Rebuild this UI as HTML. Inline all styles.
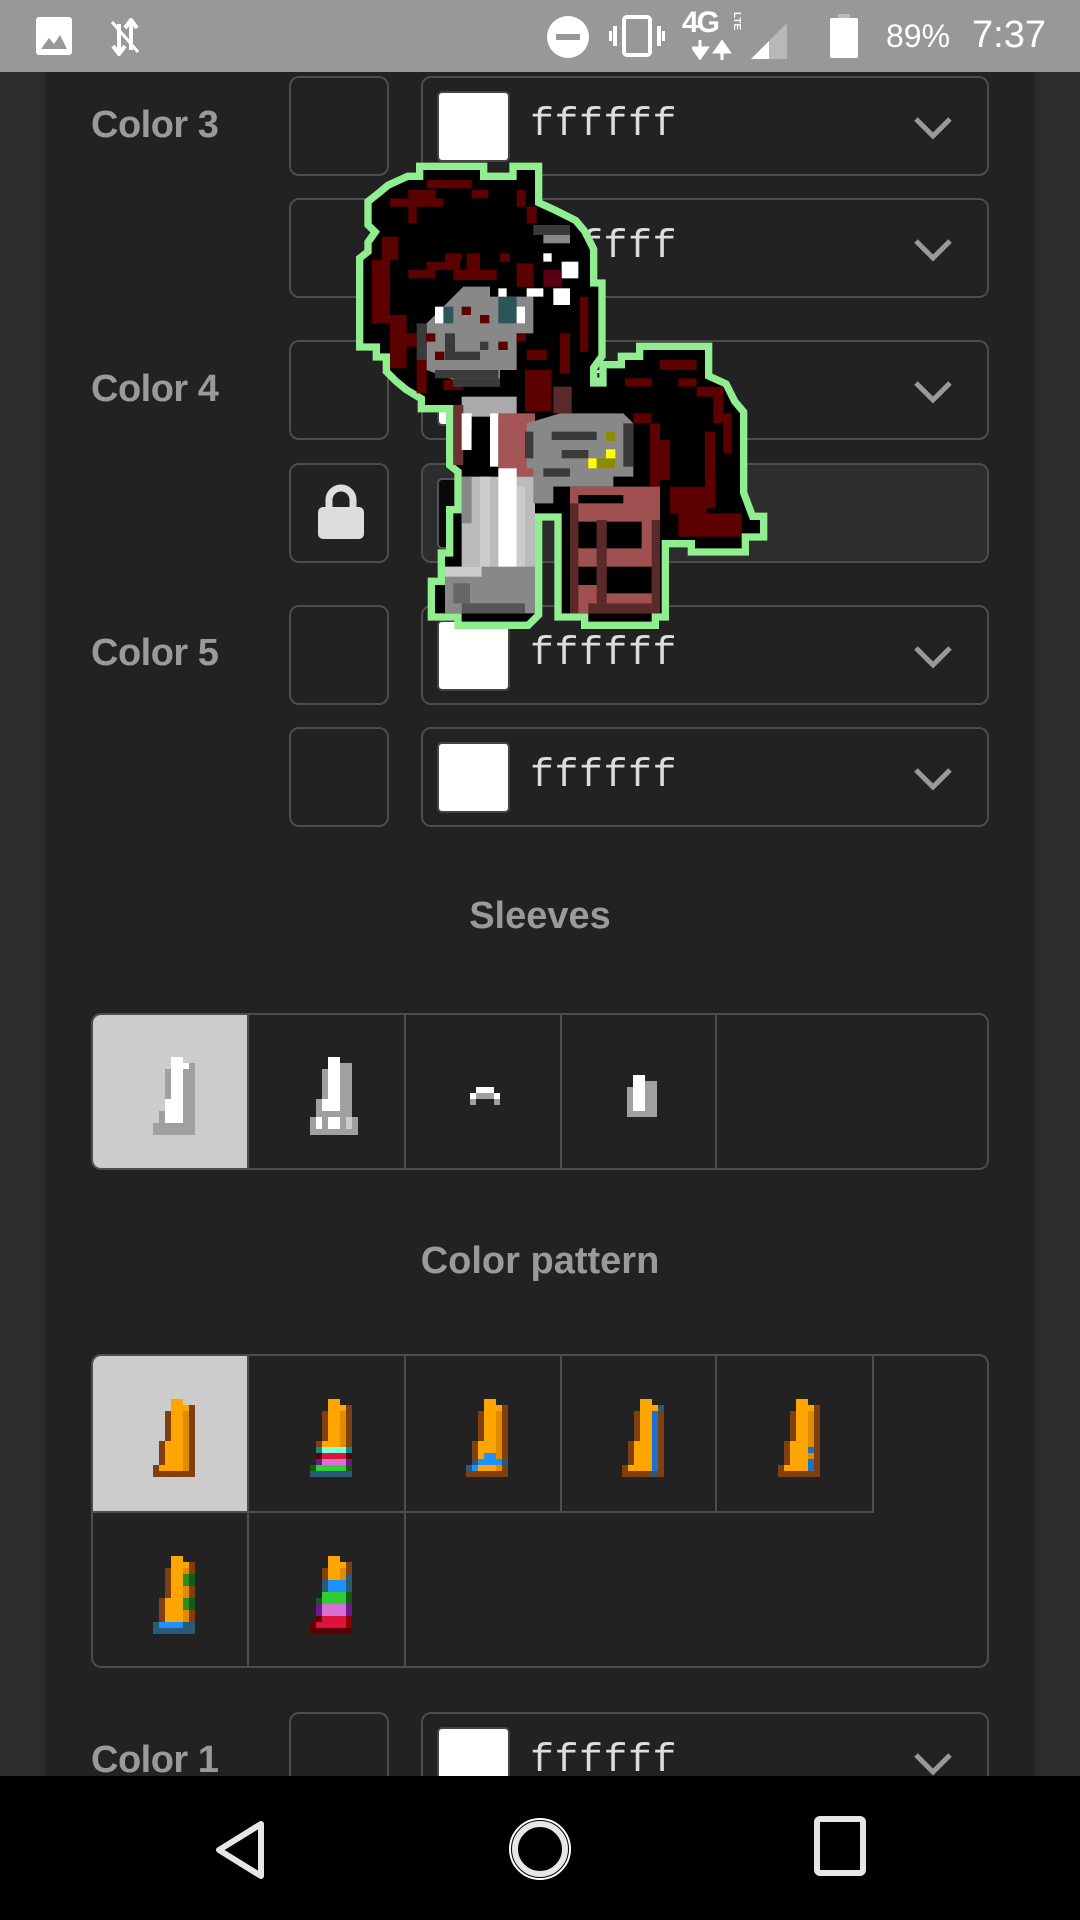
<!DOCTYPE html>
<html><head><meta charset="utf-8">
<style>
*{margin:0;padding:0;box-sizing:border-box}
body{width:1080px;height:1920px;overflow:hidden;background:#2c2c2c;position:relative;font-family:"Liberation Sans",sans-serif}
.abs{position:absolute}
#panel{left:45px;top:0;width:990px;height:1920px;background:#222}
#status{left:0;top:0;width:1080px;height:72px;background:#989898}
.lbl{position:absolute;left:91px;color:#9a9a9a;font-weight:bold;font-size:38px;line-height:40px;letter-spacing:-0.5px}
.sb{position:absolute;left:289px;width:100px;height:100px;border:2.5px solid #4d4d4d;border-radius:10px}
.sel{position:absolute;left:421px;width:568px;height:100px;border:2.5px solid #4d4d4d;border-radius:10px}
.sw{position:absolute;left:14px;top:13px;width:73px;height:71px;background:#fff;border:2px solid #444;border-radius:5px}
.hx{position:absolute;left:107px;top:26px;font-family:"Liberation Mono",monospace;font-size:40px;line-height:44px;color:#ddd;letter-spacing:0.5px}
.chev{position:absolute;left:490px;top:38px}
.title{position:absolute;left:0;width:1080px;text-align:center;color:#9a9a9a;font-weight:bold;font-size:38px}
.grid{position:absolute;left:91px;width:898px;border:2.5px solid #4d4d4d;border-radius:10px;overflow:hidden}
.cell{position:absolute;border-right:2.5px solid #4d4d4d}
</style></head><body>
<div id="panel" class="abs"></div>

<!-- Color 3 -->
<div class="lbl" style="top:105px">Color 3</div>
<div class="sb" style="top:76px"></div>
<div class="sel" style="top:76px"><div class="sw"></div><div class="hx">ffffff</div><svg class="chev" width="40" height="24"><path d="M3 3 L20 20 L37 3" stroke="#999" stroke-width="5" fill="none"/></svg></div>
<div class="sb" style="top:198px"></div>
<div class="sel" style="top:198px"><div class="sw"></div><div class="hx">ffffff</div><svg class="chev" width="40" height="24"><path d="M3 3 L20 20 L37 3" stroke="#999" stroke-width="5" fill="none"/></svg></div>

<!-- Color 4 -->
<div class="lbl" style="top:369px">Color 4</div>
<div class="sb" style="top:340px"></div>
<div class="sel" style="top:340px"><div class="sw"></div><div class="hx">ffffff</div><svg class="chev" width="40" height="24"><path d="M3 3 L20 20 L37 3" stroke="#999" stroke-width="5" fill="none"/></svg></div>
<div class="sb" style="top:463px"><svg class="abs" style="left:26px;top:19px" width="48" height="56"><path d="M12 24 V16 A12 12 0 0 1 36 16 V24" stroke="#ddd" stroke-width="7" fill="none"/><rect x="1" y="23" width="46" height="32" rx="5" fill="#ddd"/></svg></div>
<div class="sel" style="top:463px;background:#2d2d2d"><div class="sw" style="background:#0a0a0a;border-color:#555"></div></div>

<!-- Color 5 -->
<div class="lbl" style="top:633px">Color 5</div>
<div class="sb" style="top:605px"></div>
<div class="sel" style="top:605px"><div class="sw"></div><div class="hx">ffffff</div><svg class="chev" width="40" height="24"><path d="M3 3 L20 20 L37 3" stroke="#999" stroke-width="5" fill="none"/></svg></div>
<div class="sb" style="top:727px"></div>
<div class="sel" style="top:727px"><div class="sw"></div><div class="hx">ffffff</div><svg class="chev" width="40" height="24"><path d="M3 3 L20 20 L37 3" stroke="#999" stroke-width="5" fill="none"/></svg></div>

<!-- icon symbols -->
<svg width="0" height="0" style="position:absolute">
<defs>
<g id="base">
<rect x="18" y="0" width="12" height="6" fill="currentColor"/>
</g>
</defs>
</svg>

<!-- Sleeves -->
<div class="title" style="top:895px">Sleeves</div>
<div class="grid" style="top:1013px;height:157px">
 <div class="cell" style="left:0;top:0;width:156px;height:157px;background:#ccc"></div>
 <div class="cell" style="left:156px;top:0;width:157px;height:157px"></div>
 <div class="cell" style="left:313px;top:0;width:156px;height:157px"></div>
 <div class="cell" style="left:469px;top:0;width:155px;height:157px"></div>
</div>
<svg class="abs" style="left:0;top:0" width="1080" height="1920" viewBox="0 0 1080 1920">
 <!-- sleeve 1 -->
 <g transform="translate(153,1057)">
  <rect x="12" y="12" width="30" height="66" fill="#a0a0a0"/><rect x="6" y="54" width="6" height="24" fill="#a0a0a0"/><rect x="0" y="66" width="42" height="12" fill="#a0a0a0"/>
  <rect x="18" y="0" width="12" height="6" fill="#fff"/><rect x="18" y="6" width="18" height="6" fill="#fff"/><rect x="18" y="12" width="12" height="54" fill="#fff"/><rect x="12" y="42" width="6" height="24" fill="#fff"/><rect x="6" y="66" width="30" height="0" fill="#fff"/>
  <rect x="36" y="6" width="6" height="60" fill="#a0a0a0"/>
 </g>
 <!-- sleeve 2 -->
 <g transform="translate(310,1057)">
  <rect x="18" y="0" width="12" height="6" fill="#fff"/><rect x="18" y="6" width="24" height="6" fill="#a0a0a0"/><rect x="18" y="6" width="12" height="6" fill="#fff"/>
  <rect x="12" y="12" width="30" height="48" fill="#a0a0a0"/><rect x="18" y="12" width="12" height="42" fill="#fff"/><rect x="6" y="42" width="36" height="18" fill="#a0a0a0"/><rect x="12" y="42" width="18" height="12" fill="#fff"/>
  <rect x="0" y="60" width="48" height="18" fill="#a0a0a0"/><rect x="6" y="60" width="6" height="12" fill="#fff"/><rect x="18" y="60" width="12" height="12" fill="#fff"/><rect x="36" y="60" width="6" height="12" fill="#ccc"/>
 </g>
 <!-- sleeve 3 -->
 <g transform="translate(470,1087)">
  <rect x="6" y="0" width="18" height="6" fill="#fff"/><rect x="0" y="6" width="6" height="6" fill="#fff"/><rect x="6" y="6" width="18" height="6" fill="#a0a0a0"/><rect x="24" y="6" width="6" height="6" fill="#fff"/><rect x="0" y="12" width="6" height="6" fill="#a0a0a0"/><rect x="24" y="12" width="6" height="6" fill="#a0a0a0"/>
 </g>
 <!-- sleeve 4 -->
 <g transform="translate(627,1075)">
  <rect x="6" y="0" width="12" height="6" fill="#fff"/><rect x="0" y="12" width="30" height="30" fill="#a0a0a0"/><rect x="18" y="6" width="12" height="6" fill="#a0a0a0"/><rect x="6" y="6" width="12" height="30" fill="#fff"/>
 </g>
</svg>

<!-- Color pattern -->
<div class="title" style="top:1240px">Color pattern</div>
<div class="grid" style="top:1354px;height:314px">
 <div class="cell" style="left:0;top:0;width:156px;height:157px;background:#ccc;border-bottom:2.5px solid #4d4d4d"></div>
 <div class="cell" style="left:156px;top:0;width:157px;height:157px;border-bottom:2.5px solid #4d4d4d"></div>
 <div class="cell" style="left:313px;top:0;width:156px;height:157px;border-bottom:2.5px solid #4d4d4d"></div>
 <div class="cell" style="left:469px;top:0;width:155px;height:157px;border-bottom:2.5px solid #4d4d4d"></div>
 <div class="cell" style="left:624px;top:0;width:157px;height:157px;border-bottom:2.5px solid #4d4d4d"></div>
 <div class="cell" style="left:0;top:155px;width:156px;height:160px"></div>
 <div class="cell" style="left:156px;top:155px;width:157px;height:160px"></div>
</div>
<svg class="abs" style="left:0;top:0" width="1080" height="1920">
 <defs>
  <g id="boot">
   <rect x="18" y="0" width="12" height="6" fill="#ffa500"/>
   <rect x="18" y="6" width="18" height="6" fill="#ffa500"/><rect x="36" y="6" width="6" height="72" fill="#7f3f0f"/>
   <rect x="12" y="12" width="6" height="30" fill="#7f3f0f"/><rect x="18" y="12" width="12" height="54" fill="#ffa500"/><rect x="30" y="12" width="6" height="60" fill="#e08c00"/>
   <rect x="6" y="42" width="6" height="24" fill="#7f3f0f"/><rect x="12" y="42" width="6" height="30" fill="#ffa500"/>
   <rect x="0" y="66" width="6" height="6" fill="#7f3f0f"/><rect x="6" y="66" width="24" height="6" fill="#ffa500"/>
   <rect x="0" y="72" width="42" height="6" fill="#7f3f0f"/>
  </g>
 </defs>
 <use href="#boot" x="153" y="1399"/>
 <g transform="translate(310,1399)"><use href="#boot"/>
  <rect x="6" y="48" width="36" height="6" fill="#7fffd4"/><rect x="36" y="48" width="6" height="6" fill="#0a8a8a"/><rect x="6" y="48" width="6" height="6" fill="#0a8a8a"/>
  <rect x="6" y="54" width="36" height="6" fill="#dc143c"/><rect x="6" y="54" width="6" height="6" fill="#5a0000"/><rect x="36" y="54" width="6" height="6" fill="#5a0000"/>
  <rect x="6" y="60" width="36" height="6" fill="#da70d6"/><rect x="6" y="60" width="6" height="6" fill="#6a1a8a"/><rect x="36" y="60" width="6" height="6" fill="#6a1a8a"/>
  <rect x="0" y="66" width="42" height="6" fill="#32cd32"/><rect x="0" y="66" width="6" height="6" fill="#145a14"/><rect x="36" y="66" width="6" height="6" fill="#145a14"/>
  <rect x="0" y="72" width="42" height="6" fill="#2a5a7a"/></g>
 <g transform="translate(466,1399)"><use href="#boot"/>
  <rect x="18" y="54" width="12" height="6" fill="#1e90ff"/><rect x="6" y="60" width="36" height="6" fill="#1e90ff"/><rect x="6" y="60" width="6" height="6" fill="#2a5a7a"/><rect x="36" y="60" width="6" height="6" fill="#2a5a7a"/><rect x="0" y="66" width="6" height="6" fill="#2a5a7a"/><rect x="6" y="66" width="6" height="6" fill="#1e90ff"/></g>
 <g transform="translate(622,1399)"><use href="#boot"/><rect x="30" y="12" width="6" height="60" fill="#1e70d0"/><rect x="36" y="6" width="6" height="6" fill="#2a5a7a"/><rect x="30" y="72" width="6" height="6" fill="#2a5a7a"/></g>
 <g transform="translate(778,1399)"><use href="#boot"/><rect x="30" y="48" width="6" height="6" fill="#1e70d0"/><rect x="30" y="60" width="6" height="6" fill="#1e70d0"/><rect x="30" y="72" width="6" height="0" fill="#1e70d0"/><rect x="30" y="66" width="6" height="6" fill="#1e70d0"/></g>
 <g transform="translate(153,1556)"><use href="#boot"/><rect x="30" y="18" width="12" height="12" fill="#2a8a2a"/><rect x="36" y="18" width="6" height="12" fill="#145a14"/><rect x="30" y="42" width="12" height="12" fill="#2a8a2a"/><rect x="36" y="42" width="6" height="12" fill="#145a14"/><rect x="0" y="66" width="42" height="12" fill="#2a5a7a"/><rect x="6" y="66" width="24" height="6" fill="#1e90ff"/></g>
 <g transform="translate(310,1556)"><use href="#boot"/>
  <rect x="12" y="24" width="30" height="12" fill="#1e90ff"/><rect x="12" y="24" width="6" height="12" fill="#2a5a7a"/><rect x="36" y="18" width="6" height="18" fill="#2a5a7a"/>
  <rect x="12" y="36" width="30" height="12" fill="#32cd32"/><rect x="6" y="42" width="6" height="6" fill="#145a14"/><rect x="36" y="36" width="6" height="12" fill="#145a14"/>
  <rect x="6" y="48" width="36" height="12" fill="#da70d6"/><rect x="6" y="48" width="6" height="12" fill="#6a1a8a"/><rect x="36" y="48" width="6" height="12" fill="#6a1a8a"/>
  <rect x="6" y="60" width="36" height="12" fill="#dc143c"/><rect x="6" y="60" width="6" height="6" fill="#5a0000"/><rect x="0" y="66" width="6" height="6" fill="#5a0000"/><rect x="36" y="60" width="6" height="12" fill="#8a0000"/>
  <rect x="0" y="72" width="42" height="6" fill="#5a0000"/></g>
</svg>

<!-- Color 1 -->
<div class="lbl" style="top:1740px">Color 1</div>
<div class="sb" style="top:1712px"></div>
<div class="sel" style="top:1712px"><div class="sw"></div><div class="hx">ffffff</div><svg class="chev" width="40" height="24"><path d="M3 3 L20 20 L37 3" stroke="#999" stroke-width="5" fill="none"/></svg></div>

<!-- Pony -->
<svg class="abs" style="left:300px;top:140px" width="500" height="500" viewBox="0 0 1500 1500">
 <polygon fill="#000" stroke="#90ee90" stroke-width="44" stroke-linejoin="miter" paint-order="stroke" points="370,90 540,90 540,120 650,120 650,90 705,90 705,195 760,220 820,250 845,280 870,330 870,440 895,440 895,645 870,680 870,740 920,740 920,685 975,685 975,660 1030,660 1030,630 1215,630 1215,715 1270,740 1295,790 1320,820 1320,1060 1350,1140 1380,1140 1380,1180 1325,1180 1325,1225 1185,1225 1185,1200 1085,1200 1085,1420 1055,1420 1055,1445 865,1445 865,1420 785,1420 785,1120 705,1120 705,1420 680,1445 485,1445 485,1420 405,1420 405,1335 435,1335 435,1250 460,1250 460,1120 485,1120 485,990 460,970 460,795 375,795 375,770 325,740 295,715 270,690 270,640 240,640 240,610 190,610 190,360 215,340 215,310 240,275 215,250 215,190 240,170 270,145 325,120 370,120"/>
 <g fill="#5c0000">
  <rect x="270" y="175" width="160" height="25"/><rect x="380" y="120" width="135" height="25"/><rect x="325" y="150" width="80" height="25"/><rect x="515" y="150" width="50" height="25"/>
  <rect x="215" y="360" width="55" height="190"/><rect x="245" y="290" width="50" height="70"/><rect x="270" y="525" width="50" height="160"/><rect x="325" y="200" width="25" height="50"/>
  <rect x="435" y="340" width="50" height="25"/><rect x="380" y="365" width="100" height="25"/><rect x="325" y="390" width="80" height="25"/><rect x="460" y="390" width="130" height="30"/>
  <rect x="650" y="370" width="50" height="70"/><rect x="500" y="340" width="40" height="50"/><rect x="600" y="340" width="30" height="25"/><rect x="650" y="150" width="25" height="50"/><rect x="680" y="200" width="30" height="50"/>
  <rect x="840" y="470" width="25" height="165"/><rect x="780" y="580" width="30" height="120"/><rect x="680" y="630" width="60" height="30"/><rect x="675" y="690" width="80" height="125"/>
  <rect x="350" y="660" width="30" height="100"/><rect x="430" y="720" width="60" height="30"/><rect x="300" y="580" width="50" height="40"/>
  <rect x="1080" y="660" width="110" height="30"/><rect x="975" y="715" width="80" height="25"/><rect x="1135" y="715" width="55" height="25"/><rect x="1190" y="740" width="80" height="30"/><rect x="1240" y="770" width="30" height="80"/>
  <rect x="1000" y="820" width="55" height="30"/><rect x="1050" y="850" width="30" height="200"/><rect x="1080" y="900" width="30" height="120"/><rect x="1215" y="875" width="30" height="230"/><rect x="1270" y="820" width="25" height="120"/>
  <rect x="1110" y="1040" width="110" height="80"/><rect x="1135" y="1120" width="190" height="70"/>
 </g>
 <polygon fill="#888" points="380,550 490,440 570,440 570,470 700,470 700,580 650,580 650,690 600,690 600,740 460,740 460,720 380,690"/>
 <g fill="#3a3a3a"><rect x="435" y="580" width="30" height="80"/><rect x="460" y="635" width="80" height="25"/><rect x="405" y="690" width="190" height="25"/><rect x="460" y="715" width="140" height="25"/><rect x="540" y="605" width="25" height="25"/><rect x="350" y="550" width="30" height="110"/><rect x="700" y="255" width="110" height="30"/></g>
 <rect x="730" y="285" width="80" height="25" fill="#888"/>
 <g fill="#2d5558"><rect x="430" y="500" width="30" height="50"/><rect x="595" y="470" width="55" height="80"/></g>
 <g fill="#fff"><rect x="405" y="500" width="25" height="50"/><rect x="650" y="500" width="25" height="50"/><rect x="595" y="445" width="25" height="25"/><rect x="785" y="365" width="50" height="50"/><rect x="760" y="445" width="50" height="50"/><rect x="680" y="445" width="50" height="25"/><rect x="730" y="340" width="25" height="25"/></g>
 <rect x="730" y="390" width="55" height="50" fill="#5a0012"/>
 <g fill="#5c0000"><rect x="485" y="500" width="28" height="25"/><rect x="540" y="525" width="28" height="25"/><rect x="378" y="580" width="28" height="25"/><rect x="595" y="605" width="28" height="25"/><rect x="405" y="635" width="28" height="25"/><rect x="650" y="580" width="28" height="25"/></g>
 <!-- front body -->
 <rect x="485" y="770" width="165" height="60" fill="#aaa"/>
 <rect x="460" y="795" width="30" height="180" fill="#6b3333"/>
 <rect x="485" y="820" width="30" height="110" fill="#fff"/>
 <rect x="515" y="870" width="55" height="110" fill="#000"/>
 <rect x="570" y="820" width="25" height="160" fill="#fff"/>
 <rect x="595" y="820" width="110" height="190" fill="#a55555"/>
 <rect x="485" y="1010" width="220" height="300" fill="#bbb"/>
 <rect x="540" y="1010" width="30" height="300" fill="#ccc"/>
 <rect x="595" y="985" width="55" height="320" fill="#fff"/>
 <rect x="650" y="1040" width="25" height="270" fill="#ccc"/>
 <rect x="485" y="1010" width="30" height="140" fill="#888"/>
 <rect x="435" y="1280" width="270" height="140" fill="#888"/>
 <rect x="435" y="1280" width="110" height="30" fill="#ccc"/>
 <rect x="485" y="1390" width="190" height="30" fill="#555"/>
 <rect x="460" y="1330" width="50" height="60" fill="#666"/>
 <!-- wing -->
 <polygon fill="#888" points="680,850 780,820 970,820 1000,850 1000,1010 940,1010 940,1040 760,1040 760,1090 700,1090 700,985 680,985"/>
 <g fill="#3a3a3a"><rect x="755" y="875" width="135" height="25"/><rect x="785" y="930" width="80" height="25"/><rect x="730" y="985" width="80" height="25"/><rect x="675" y="875" width="25" height="80"/><rect x="970" y="850" width="30" height="130"/></g>
 <rect x="865" y="955" width="25" height="30" fill="#ff0"/><rect x="918" y="928" width="28" height="30" fill="#ff0"/><rect x="890" y="955" width="55" height="30" fill="#8b8b00"/><rect x="918" y="875" width="28" height="28" fill="#8b8b00"/>
 <!-- back leg -->
 <rect x="810" y="1040" width="270" height="380" fill="#a05050"/>
 <g fill="#5a2a2a"><rect x="810" y="1090" width="25" height="330"/><rect x="1055" y="1140" width="25" height="280"/><rect x="865" y="1390" width="190" height="30"/><rect x="890" y="1140" width="30" height="250"/><rect x="760" y="740" width="55" height="80"/></g>
 <g fill="#000"><rect x="835" y="1065" width="135" height="25"/><rect x="835" y="1145" width="55" height="80"/><rect x="920" y="1145" width="105" height="80"/><rect x="835" y="1280" width="55" height="55"/><rect x="920" y="1280" width="135" height="80"/></g>
</svg>

<!-- status bar -->
<div id="status" class="abs">
 <svg class="abs" style="left:36px;top:17px" width="36" height="38"><rect x="0" y="0" width="36" height="38" rx="3" fill="#fff"/><path d="M5 32 L13 21 L18 27 L24 18 L31 32 Z" fill="#989898"/></svg>
 <svg class="abs" style="left:110px;top:18px" width="30" height="38"><path d="M9 36 V6 M3 28 L9 36 L15 28 M21 2 V32 M15 10 L21 2 L27 10" stroke="#fff" stroke-width="4" fill="none"/><path d="M2 4 L28 34" stroke="#fff" stroke-width="3"/></svg>
 <svg class="abs" style="left:546px;top:15px" width="44" height="44"><circle cx="22" cy="22" r="21" fill="#fff"/><rect x="10" y="19" width="24" height="6" fill="#989898"/></svg>
 <svg class="abs" style="left:609px;top:15px" width="56" height="42"><rect x="15" y="2" width="26" height="38" rx="3" stroke="#fff" stroke-width="4" fill="none"/><rect x="4" y="11" width="4" height="20" fill="#fff"/><rect x="48" y="11" width="4" height="20" fill="#fff"/><rect x="0" y="16" width="3" height="10" fill="#fff"/><rect x="53" y="16" width="3" height="10" fill="#fff"/></svg>
 <div class="abs" style="left:682px;top:8px;color:#fff;font-weight:bold;font-size:30px;letter-spacing:-2px;line-height:30px">4G</div>
 <div class="abs" style="left:726px;top:12px;color:#fff;font-weight:bold;font-size:10px;transform:rotate(90deg);transform-origin:0 0;left:742px">LTE</div>
 <svg class="abs" style="left:692px;top:40px" width="44" height="20"><path d="M8 0 V10 M1 8 L8 18 L15 8 Z M30 20 V10 M23 12 L30 2 L37 12 Z" stroke="#fff" stroke-width="3" fill="#fff"/></svg>
 <svg class="abs" style="left:751px;top:23px" width="36" height="36"><path d="M0 36 L36 0 V36 Z" fill="#b8b8b8"/><path d="M0 36 L18 18 V36 Z" fill="#fff"/></svg>
 <svg class="abs" style="left:830px;top:14px" width="28" height="44"><rect x="8" y="0" width="12" height="5" fill="#bbb"/><rect x="0" y="4" width="28" height="40" rx="2" fill="#fff"/></svg>
 <div class="abs" style="left:886px;top:19px;color:#fff;font-size:32px;line-height:34px">89%</div>
 <div class="abs" style="left:972px;top:15px;color:#fff;font-size:38px;line-height:40px">7:37</div>
</div>

<!-- nav bar -->
<div class="abs" style="left:0;top:1776px;width:1080px;height:144px;background:#000">
 <svg class="abs" style="left:214px;top:44px" width="50" height="60"><path d="M47 4 V56 L5 30 Z" stroke="#e6e6e6" stroke-width="6" fill="none" stroke-linejoin="round"/></svg>
 <svg class="abs" style="left:505px;top:38px" width="70" height="70"><circle cx="35" cy="35" r="30" stroke="#fff" stroke-width="2" fill="none"/><circle cx="35" cy="35" r="25" stroke="#e6e6e6" stroke-width="6" fill="none"/></svg>
 <svg class="abs" style="left:814px;top:40px" width="52" height="62"><rect x="3" y="3" width="46" height="54" rx="3" stroke="#e6e6e6" stroke-width="6" fill="none"/></svg>
</div>
</body></html>
